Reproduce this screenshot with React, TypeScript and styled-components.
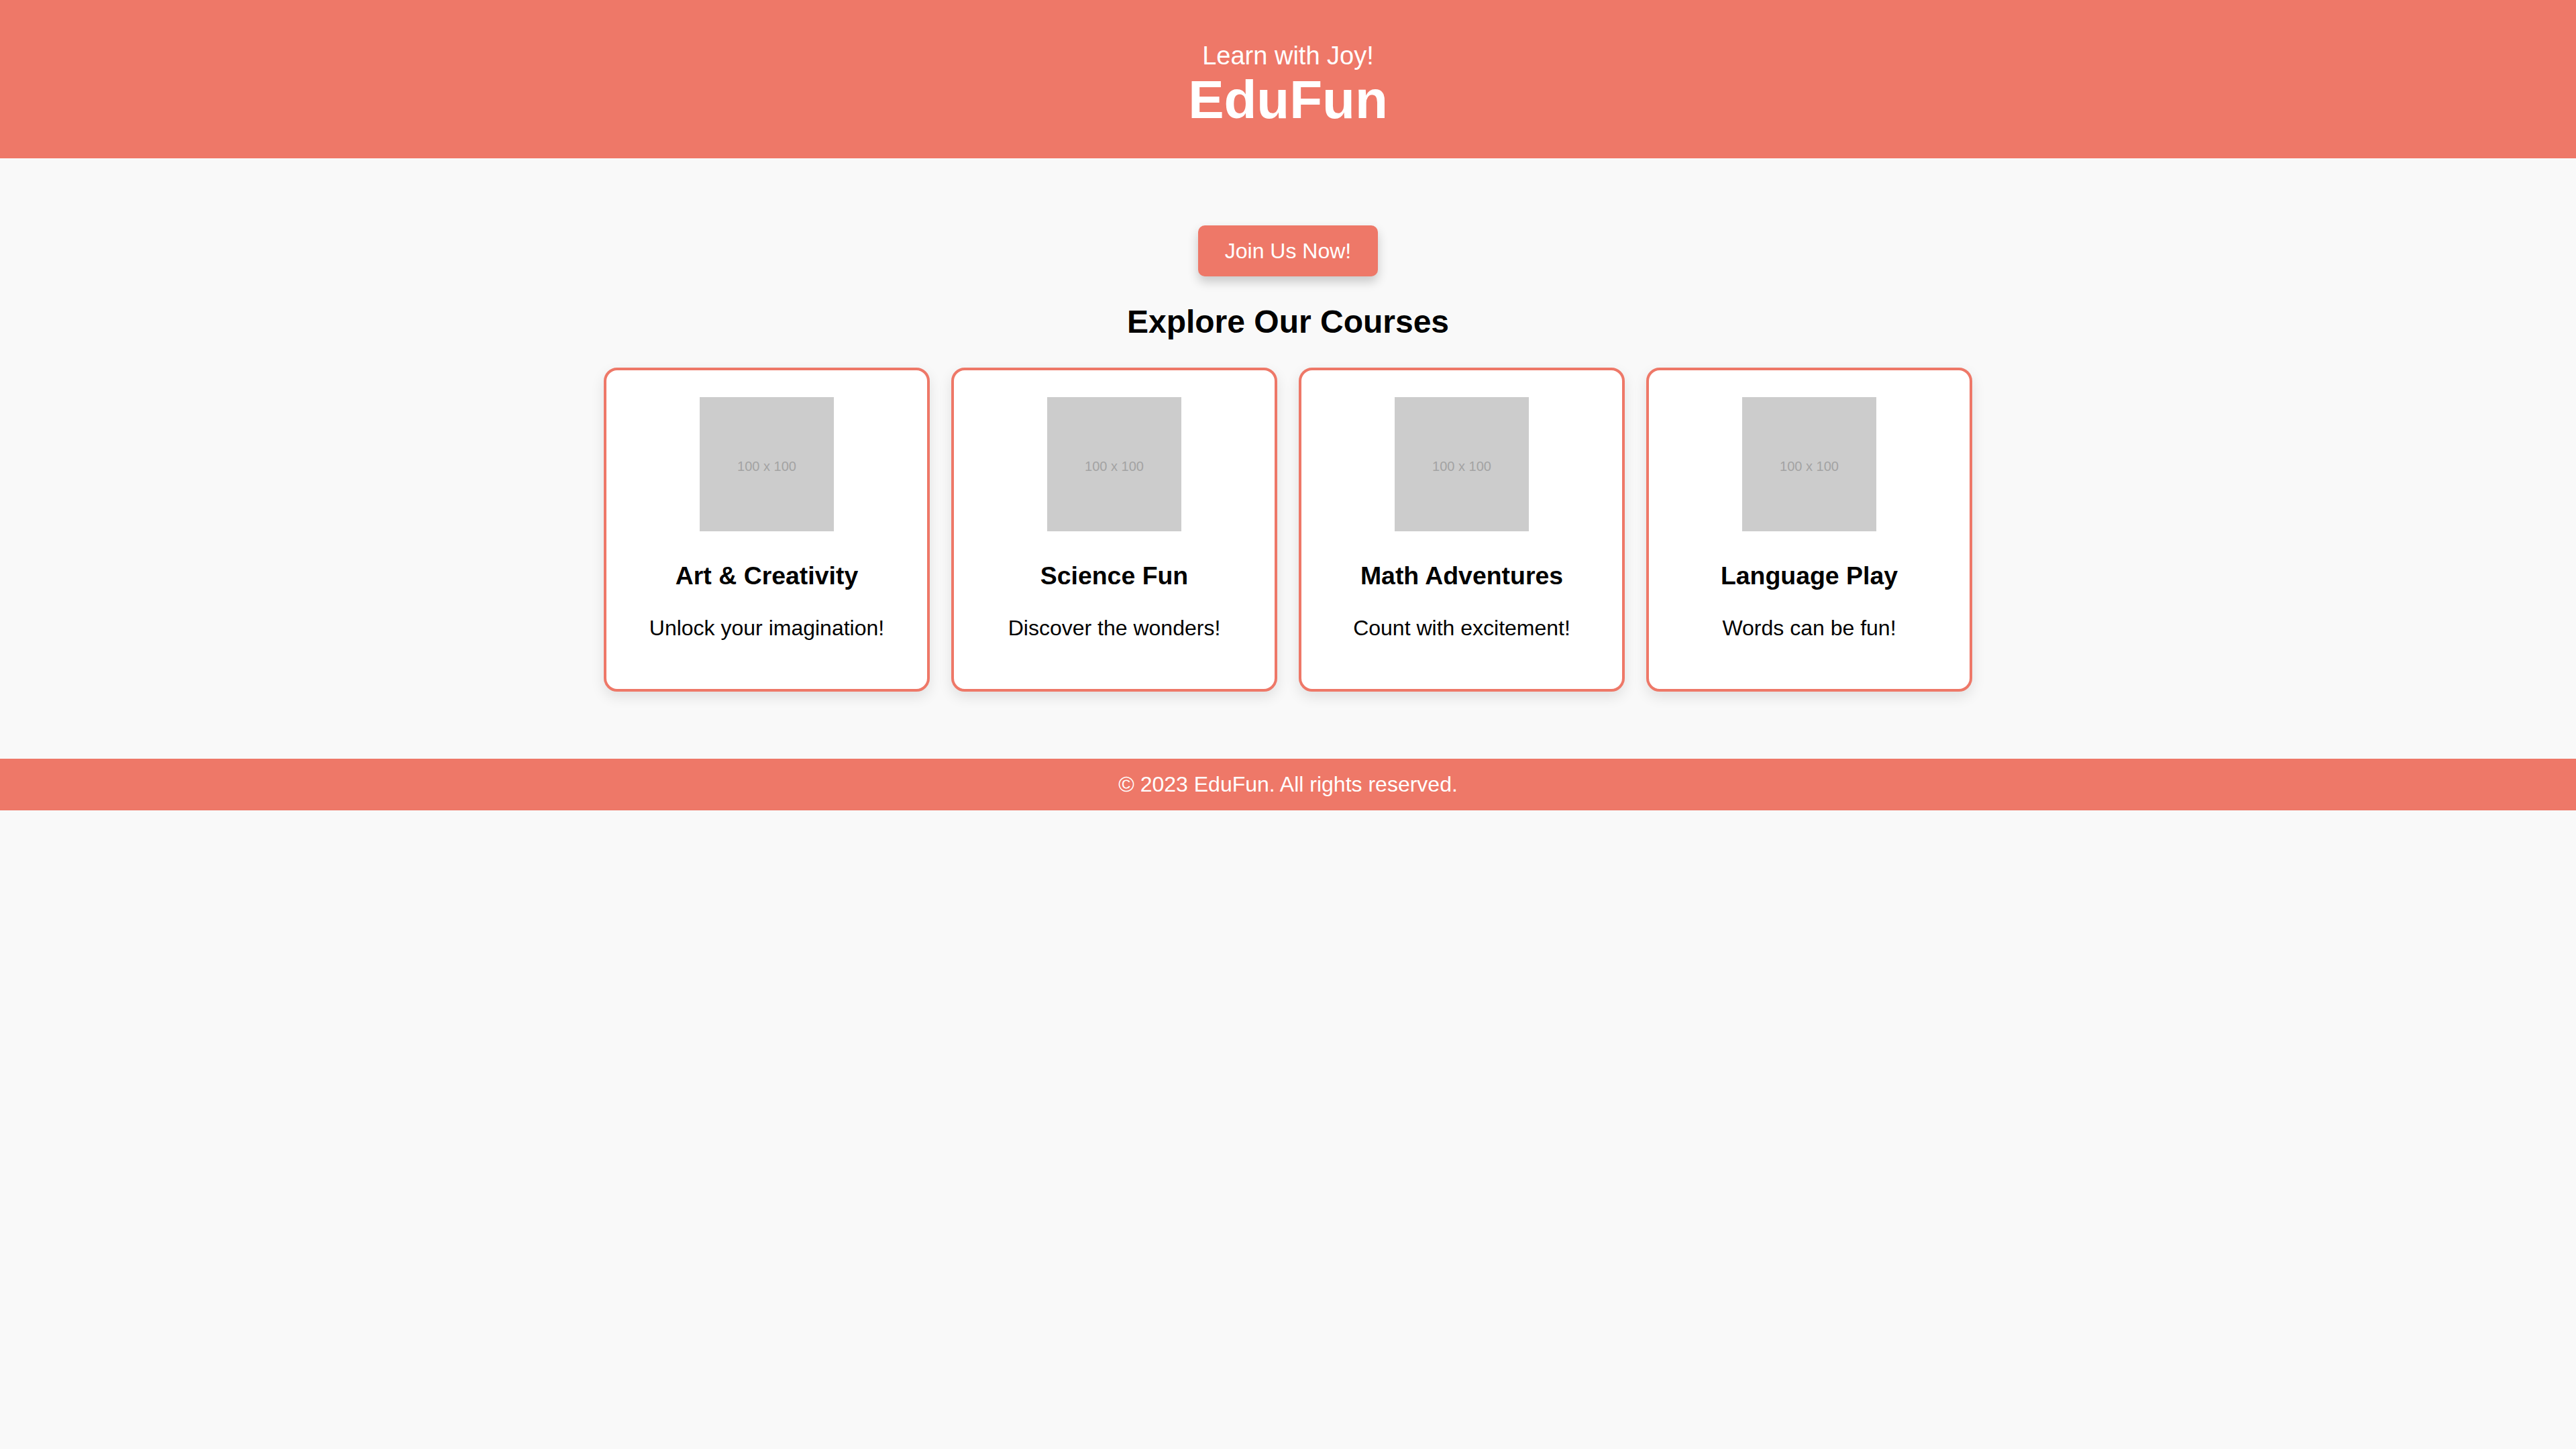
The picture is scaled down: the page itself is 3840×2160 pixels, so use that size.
import React from "react";
import styled, { createGlobalStyle } from "styled-components";

const CORAL = "#ee7868";

const GlobalStyle = createGlobalStyle`
  html, body {
    margin: 0;
    padding: 0;
    background: #f9f9f9;
    font-family: "Liberation Sans", Arial, Helvetica, sans-serif;
    color: #000;
  }
  * { box-sizing: border-box; }
`;

const Header = styled.header`
  background: ${CORAL};
  color: #fff;
  padding: 61px 0 41px;
  display: flex;
  flex-direction: column;
  align-items: center;
  text-align: center;
`;

const Tagline = styled.p`
  margin: 0;
  font-size: 38px;
  line-height: 44px;
  font-weight: 400;
`;

const Brand = styled.h1`
  margin: -2px 0 0;
  font-size: 80px;
  line-height: 92px;
  font-weight: 700;
`;

const Main = styled.main`
  padding: 100px 0;
  display: flex;
  flex-direction: column;
  align-items: center;
`;

const JoinButton = styled.button`
  font-family: inherit;
  font-size: 32px;
  line-height: 36px;
  height: 76px;
  padding: 0 40px;
  color: #fff;
  background: ${CORAL};
  border: none;
  border-radius: 10px;
  box-shadow: 0 8px 16px rgba(0, 0, 0, 0.2);
  cursor: pointer;
`;

const SectionTitle = styled.h2`
  margin: 40px 0;
  font-size: 48px;
  line-height: 56px;
  font-weight: 700;
`;

const CardRow = styled.div`
  display: flex;
  justify-content: center;
  gap: 32px;
`;

const Card = styled.div`
  width: 486px;
  background: #fff;
  border: 4px solid ${CORAL};
  border-radius: 20px;
  padding: 40px;
  box-shadow: 0 8px 20px rgba(0, 0, 0, 0.1);
  display: flex;
  flex-direction: column;
  align-items: center;
  text-align: center;
`;

const Placeholder = styled.div`
  width: 200px;
  height: 200px;
  background: #cccccc;
  color: #a3a3a3;
  font-size: 20px;
  display: flex;
  align-items: center;
  justify-content: center;
  padding-top: 7px;
`;

const CardTitle = styled.h3`
  margin: 45px 0 0;
  font-size: 37.44px;
  line-height: 43px;
  font-weight: 700;
`;

const CardText = styled.p`
  margin: 38px 0 32px;
  font-size: 32px;
  line-height: 37px;
`;

const Footer = styled.footer`
  background: ${CORAL};
  color: #fff;
  padding: 20px;
  font-size: 32px;
  line-height: 37px;
  text-align: center;
`;

const courses = [
  { title: "Art & Creativity", text: "Unlock your imagination!" },
  { title: "Science Fun", text: "Discover the wonders!" },
  { title: "Math Adventures", text: "Count with excitement!" },
  { title: "Language Play", text: "Words can be fun!" },
];

export default function App() {
  return (
    <>
      <GlobalStyle />
      <Header>
        <Tagline>Learn with Joy!</Tagline>
        <Brand>EduFun</Brand>
      </Header>
      <Main>
        <JoinButton>Join Us Now!</JoinButton>
        <SectionTitle>Explore Our Courses</SectionTitle>
        <CardRow>
          {courses.map((c) => (
            <Card key={c.title}>
              <Placeholder>100 x 100</Placeholder>
              <CardTitle>{c.title}</CardTitle>
              <CardText>{c.text}</CardText>
            </Card>
          ))}
        </CardRow>
      </Main>
      <Footer>© 2023 EduFun. All rights reserved.</Footer>
    </>
  );
}
